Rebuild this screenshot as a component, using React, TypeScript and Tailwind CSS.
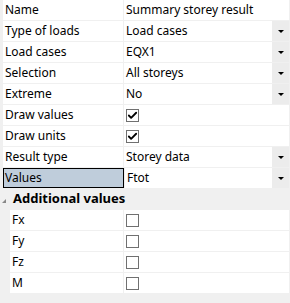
import { Check } from 'lucide-react';

type Row = {
    label: string;
    value?: string;
    kind: 'text' | 'combo' | 'check';
    checked?: boolean;
    selected?: boolean;
};

const rows: Row[] = [
    { label: 'Name', value: 'Summary storey result', kind: 'text' },
    { label: 'Type of loads', value: 'Load cases', kind: 'combo' },
    { label: 'Load cases', value: 'EQX1', kind: 'combo' },
    { label: 'Selection', value: 'All storeys', kind: 'combo' },
    { label: 'Extreme', value: 'No', kind: 'combo' },
    { label: 'Draw values', kind: 'check', checked: true },
    { label: 'Draw units', kind: 'check', checked: true },
    { label: 'Result type', value: 'Storey data', kind: 'combo' },
    { label: 'Values', value: 'Ftot', kind: 'combo', selected: true },
];

const extra = ['Fx', 'Fy', 'Fz', 'M'];

function CheckBox({ checked }: { checked?: boolean }) {
    return (
        <div className="w-[13px] h-[13px] border border-[#707070] bg-white flex items-center justify-center">
            {checked && <Check size={11} strokeWidth={4} className="text-black" />}
        </div>
    );
}

function ComboButton() {
    return (
        <div className="w-[17px] h-full bg-[#ececec] flex items-center justify-center">
            <div className="w-0 h-0 border-l-[3px] border-r-[3px] border-t-[3px] border-l-transparent border-r-transparent border-t-black" />
        </div>
    );
}

export default function App() {
    return (
        <div
            className="w-[290px] h-[303px] bg-[#f0f0f0] pl-[3px] pr-[1px] flex flex-col gap-px text-[12px] text-black overflow-hidden"
            style={{ fontFamily: '"Segoe UI", "Noto Sans", sans-serif' }}
        >
            {rows.map((r) => (
                <div key={r.label} className="flex h-[20px] gap-px shrink-0">
                    <div
                        className={
                            r.selected
                                ? 'w-[121px] bg-[#bfcddb] border border-black pl-[1px] flex items-center'
                                : 'w-[120px] bg-white pl-[2px] flex items-center'
                        }
                    >
                        {r.label}
                    </div>
                    <div className="flex-1 bg-white flex items-center pl-[2px]">
                        {r.kind === 'check' ? (
                            <CheckBox checked={r.checked} />
                        ) : (
                            <>
                                <span className="flex-1">{r.value}</span>
                                {r.kind === 'combo' && <ComboButton />}
                            </>
                        )}
                    </div>
                </div>
            ))}

            {/* Additional values category */}
            <div className="flex items-center h-[20px] shrink-0">
                <div className="w-[9px] flex justify-start">
                    <div className="w-0 h-0 border-l-[4px] border-t-[4px] border-l-transparent border-t-transparent border-r-[0px] border-b-[4px] border-b-[#888] -ml-[1px]" />
                </div>
                <span className="font-bold text-[13px] pl-[1px]">Additional values</span>
            </div>

            {extra.map((e) => (
                <div key={e} className="flex h-[20px] gap-px shrink-0 pl-[7px]">
                    <div className="w-[113px] bg-white pl-[2px] flex items-center">{e}</div>
                    <div className="flex-1 bg-white flex items-center pl-[2px]">
                        <CheckBox />
                    </div>
                </div>
            ))}
        </div>
    );
}
